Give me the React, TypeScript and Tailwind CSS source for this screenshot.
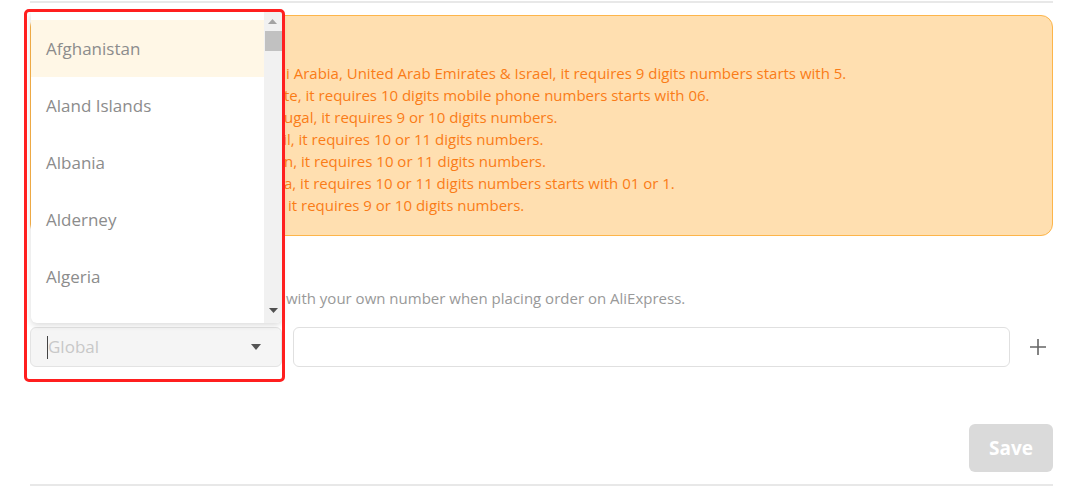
import React from "react";

const lines: [string, string, string][] = [
  ["1. For Saud", "i Arabia, United Arab Emirates & Israel, it requires 9 digits numbers starts with 5.", "w-[236px]"],
  ["2. For Reunion & Mayot", "te, it requires 10 digits mobile phone numbers starts with 06.", "w-[234px]"],
  ["3. For Port", "ugal, it requires 9 or 10 digits numbers.", "w-[234px]"],
  ["4. For Brazi", "l, it requires 10 or 11 digits numbers.", "w-[237px]"],
  ["5. For Japa", "n, it requires 10 or 11 digits numbers.", "w-[234px]"],
  ["6. For Malaysi", "a, it requires 10 or 11 digits numbers starts with 01 or 1.", "w-[234px]"],
];

const countries = ["Afghanistan", "Aland Islands", "Albania", "Alderney", "Algeria", "American Samoa"];

function Line({ pre, post, w }: { pre: string; post: string; w: string }) {
  return (
    <div className="flex whitespace-nowrap">
      <span className={`${w} flex shrink-0 justify-end overflow-hidden`}>
        <span className="shrink-0">{pre}</span>
      </span>
      <span>{post}</span>
    </div>
  );
}

export default function App() {
  return (
    <div className="relative h-[491px] w-[1082px] overflow-hidden bg-white font-['Open_Sans',sans-serif]">
      <div className="ml-[30px] w-[1023px] pt-[1px]">
        <div className="h-[2px] bg-[#e8e8e8]" />
        <div className="mt-[12px] rounded-[12px] border border-[#fdb54a] bg-[#ffdfb0] pb-[19px] pl-[19px] pt-[13px] text-[15px] leading-[22px] text-[#fa7c17]">
          <div className="mb-[11px] font-semibold">Note:</div>
          {lines.map(([a, b, w], i) => (
            <Line key={i} pre={a} post={b} w={w} />
          ))}
          <div className="flex whitespace-nowrap">
            <span className="flex w-[233px] shrink-0 justify-end overflow-hidden">
              <span className="shrink-0">7. For Chile,</span>
            </span>
            <span className="pl-[5px]">it requires 9 or 10 digits numbers.</span>
          </div>
        </div>
        <div className="mt-[18px] pl-[20px] text-[15px] font-semibold leading-[22px] text-[#333]">Phone Number</div>
        <div className="mt-[11px] flex whitespace-nowrap pl-[4px] text-[15px] leading-[22px] text-[#999]">
          <span className="flex w-[251px] shrink-0 justify-end overflow-hidden">
            <span className="shrink-0">We will replace customer&apos;s phone number</span>
          </span>
          <span className="pl-[1px]">with your own number when placing order on AliExpress.</span>
        </div>
        <div className="mt-[18px] flex h-[40px] items-center">
          <div className="relative flex h-[40px] w-[252px] items-center justify-between rounded-[6px] border border-[#e3e3e3] bg-[#f5f5f5] pl-[17px] pr-[20px]">
            <span className="text-[17px] text-[#c8c8c8]">Global</span>
            <span className="absolute left-[16px] top-[8px] h-[23px] w-[1px] bg-[#444]" />
            <svg width="10" height="6" viewBox="0 0 10 6">
              <path d="M0 0 L10 0 L5 6 Z" fill="#555" />
            </svg>
          </div>
          <div className="ml-[11px] h-[40px] flex-1 rounded-[6px] border border-[#e0e0e0] bg-white" />
          <svg className="ml-[20px] mr-[7px]" width="16" height="16" viewBox="0 0 16 16">
            <path d="M8 0 V16 M0 8 H16" stroke="#666" strokeWidth="1.6" />
          </svg>
        </div>
        <div className="mt-[57px] flex justify-end">
          <button className="h-[48px] w-[84px] rounded-[6px] bg-[#dadada] text-[19px] font-bold text-white">
            Save
          </button>
        </div>
        <div className="mt-[12px] h-[2px] bg-[#e8e8e8]" />
      </div>

      {/* dropdown list */}
      <div className="absolute left-[31px] top-[12px] flex h-[311px] w-[251px] overflow-hidden rounded-b-[6px] bg-white shadow-[0_2px_6px_rgba(0,0,0,0.15)]">
        <div className="flex-1 pt-[8px]">
          {countries.map((c, i) => (
            <div
              key={c}
              className={`flex h-[57px] items-center pl-[15px] text-[17px] text-[#8c8c8c] ${i === 0 ? "bg-[#fff7e6]" : ""}`}
            >
              {c}
            </div>
          ))}
        </div>
        <div className="relative w-[18px] bg-[#f1f1f1]">
          <svg className="absolute left-[4px] top-[7px]" width="9" height="5" viewBox="0 0 9 5">
            <path d="M0 5 L9 5 L4.5 0 Z" fill="#a3a3a3" />
          </svg>
          <div className="absolute left-[1px] top-[19px] h-[20px] w-[17px] bg-[#c1c1c1]" />
          <svg className="absolute left-[5px] top-[296px]" width="9" height="5" viewBox="0 0 9 5">
            <path d="M0 0 L9 0 L4.5 5 Z" fill="#505050" />
          </svg>
        </div>
      </div>

      {/* red highlight frame */}
      <div className="pointer-events-none absolute left-[24px] top-[9px] h-[373px] w-[261px] rounded-[5px] border-[3px] border-[#ff1f1f]" />
    </div>
  );
}
